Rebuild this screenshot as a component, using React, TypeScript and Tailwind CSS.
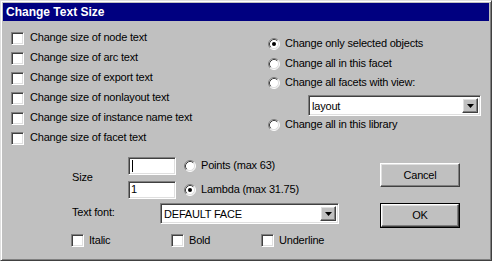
import React from "react";

const sunken =
  "border border-t-[#808080] border-l-[#808080] border-r-white border-b-white shadow-[inset_1px_1px_0_#404040,inset_-1px_-1px_0_#dfdfdf]";
const raised =
  "border border-t-white border-l-white border-r-[#404040] border-b-[#404040] shadow-[inset_-1px_-1px_0_#808080,inset_1px_1px_0_#dfdfdf]";

function CheckBox() {
  return <div className={`w-[13px] h-[13px] shrink-0 bg-white ${sunken}`} />;
}

function Radio({ on = false }: { on?: boolean }) {
  return (
    <svg width="12" height="12" viewBox="0 0 12 12" className="shrink-0">
      <circle cx="6" cy="6" r="5" fill="white" />
      <path d="M2.11 9.89 A5.5 5.5 0 0 1 9.89 2.11" fill="none" stroke="#808080" />
      <path d="M9.89 2.11 A5.5 5.5 0 0 1 2.11 9.89" fill="none" stroke="#ffffff" />
      <path d="M2.82 9.18 A4.5 4.5 0 0 1 9.18 2.82" fill="none" stroke="#404040" />
      <path d="M9.18 2.82 A4.5 4.5 0 0 1 2.82 9.18" fill="none" stroke="#dfdfdf" />
      {on && <circle cx="6" cy="6" r="2" fill="black" />}
    </svg>
  );
}

function CheckRow({ label }: { label: string }) {
  return (
    <div className="h-[20px] flex items-center gap-[6px]">
      <CheckBox />
      <span className="pb-[2px]">{label}</span>
    </div>
  );
}

function RadioRow({ label, on, h = "h-[20px]" }: { label: string; on?: boolean; h?: string }) {
  return (
    <div className={`${h} flex items-center gap-[5px]`}>
      <Radio on={on} />
      <span className="pb-[1px]">{label}</span>
    </div>
  );
}

function Select({ value, w }: { value: string; w: string }) {
  return (
    <div className={`${w} h-[21px] bg-white p-[2px] flex ${sunken}`}>
      <div className="flex-1 pl-[1px] leading-[17px]">{value}</div>
      <div className={`w-[16px] h-full bg-[#c0c0c0] flex items-center justify-center ${raised}`}>
        <svg width="7" height="4" viewBox="0 0 7 4">
          <path d="M0 0H7L3.5 4Z" fill="black" />
        </svg>
      </div>
    </div>
  );
}

const checks = [
  "Change size of node text",
  "Change size of arc text",
  "Change size of export text",
  "Change size of nonlayout text",
  "Change size of instance name text",
  "Change size of facet text",
];

export default function App() {
  return (
    <div
      className={`w-[492px] h-[261px] bg-[#c0c0c0] p-[2px] flex flex-col text-black text-[11px] tracking-[-0.2px] border border-t-[#dfdfdf] border-l-[#dfdfdf] border-r-[#404040] border-b-[#404040] shadow-[inset_1px_1px_0_#fff,inset_-1px_-1px_0_#808080]`}
      style={{ fontFamily: '"Liberation Sans", Arial, sans-serif' }}
    >
      {/* Title bar */}
      <div className="h-[18px] bg-[#000080] text-white font-bold text-[12px] tracking-normal pl-[3px] flex items-center">
        Change Text Size
      </div>

      {/* Top: checkboxes + scope radios */}
      <div className="h-[127px] flex">
        <div className="w-[265px] pl-[8px] pt-[7px]">
          {checks.map((c) => (
            <CheckRow key={c} label={c} />
          ))}
        </div>
        <div className="flex-1 pt-[12px]">
          <RadioRow label="Change only selected objects" on h="h-[21px]" />
          <RadioRow label="Change all in this facet" h="h-[19px]" />
          <RadioRow label="Change all facets with view:" />
          <div className="pl-[40px] mt-[2px]">
            <Select value="layout" w="w-[173px]" />
          </div>
          <RadioRow label="Change all in this library" h="h-[18px]" />
        </div>
      </div>

      {/* Bottom: size, font, style + buttons */}
      <div className="flex-1 flex">
        <div className="w-[377px] pl-[69px] pt-[9px]">
          <div className="flex items-center">
            <div className="w-[56px] pb-[2px]">Size</div>
            <div className="flex flex-col gap-[6px]">
              <div className="h-[18px] flex items-center">
                <div className={`w-[48px] h-full bg-white p-[2px] flex items-center ${sunken}`}>
                  <div className="w-[1px] h-[12px] bg-black ml-[1px]" />
                </div>
                <div className="ml-[8px] flex items-center gap-[5px]">
                  <Radio />
                  <span className="pb-[1px]">Points (max 63)</span>
                </div>
              </div>
              <div className="h-[18px] flex items-center">
                <div className={`w-[48px] h-full bg-white pl-[2px] leading-[14px] ${sunken}`}>1</div>
                <div className="ml-[8px] flex items-center gap-[5px]">
                  <Radio on />
                  <span className="pb-[1px]">Lambda (max 31.75)</span>
                </div>
              </div>
            </div>
          </div>

          <div className="mt-[4px] flex items-center">
            <div className="w-[88px] pb-[2px]">Text font:</div>
            <Select value="DEFAULT FACE" w="w-[179px]" />
          </div>

          <div className="mt-[8px] -ml-[1px] flex">
            <div className="w-[100px] flex items-center gap-[5px]">
              <CheckBox />
              <span className="pb-[1px]">Italic</span>
            </div>
            <div className="w-[90px] flex items-center gap-[5px]">
              <CheckBox />
              <span className="pb-[1px]">Bold</span>
            </div>
            <div className="flex items-center gap-[5px]">
              <CheckBox />
              <span className="pb-[1px]">Underline</span>
            </div>
          </div>
        </div>

        <div className="pt-[15px] flex flex-col">
          <button className={`w-[80px] h-[24px] bg-[#c0c0c0] ${raised}`}>Cancel</button>
          <div className="mt-[16px] w-[80px] h-[25px] border border-black flex">
            <button className={`flex-1 bg-[#c0c0c0] ${raised}`}>OK</button>
          </div>
        </div>
      </div>
    </div>
  );
}
